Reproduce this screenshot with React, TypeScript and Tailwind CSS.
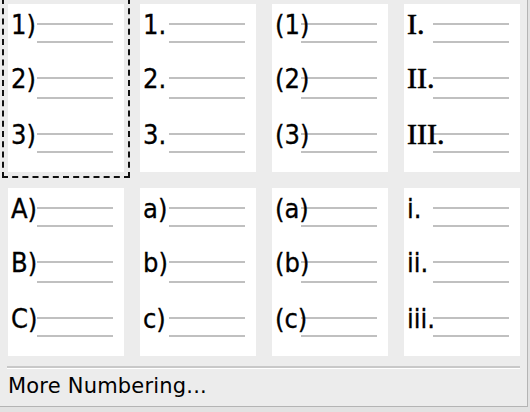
import React from "react";

type Style = {
  labels: string[];
  serif?: boolean;
};

const rows: Style[][] = [
  [
    { labels: ["1)", "2)", "3)"] },
    { labels: ["1.", "2.", "3."] },
    { labels: ["(1)", "(2)", "(3)"] },
    { labels: ["I.", "II.", "III."], serif: true },
  ],
  [
    { labels: ["A)", "B)", "C)"] },
    { labels: ["a)", "b)", "c)"] },
    { labels: ["(a)", "(b)", "(c)"] },
    { labels: ["i.", "ii.", "iii."] },
  ],
];

// gap between the two rule lines of each entry
const innerGaps = ["gap-[16px]", "gap-[18px]", "gap-[16px]"];

function Entry({ label, index, serif }: { label: string; index: number; serif?: boolean }) {
  return (
    <div className={`relative ${index === 0 ? "mt-[19px]" : "mt-[34px]"}`}>
      <div className={`ml-[29px] flex w-[76px] flex-col ${innerGaps[index]}`}>
        <div className="h-[2px] bg-[#c0c0c0]" />
        <div className="h-[2px] bg-[#c0c0c0]" />
      </div>
      {serif ? (
        <span className="absolute left-[3px] top-[-16px] whitespace-nowrap font-['Liberation_Serif',serif] text-[30px] leading-[33px] text-black [-webkit-text-stroke:0.6px_black]">
          {label}
        </span>
      ) : (
        <span className="absolute left-[3px] top-[-14px] whitespace-nowrap font-['DejaVu_Sans_Condensed','DejaVu_Sans',sans-serif] text-[27px] leading-[31px] text-black [-webkit-text-stroke:0.3px_black]">
          {label}
        </span>
      )}
    </div>
  );
}

function Card({ style, selected }: { style: Style; selected?: boolean }) {
  return (
    <div
      className={`flex h-[168px] w-[116px] flex-col bg-white ${
        selected ? "outline-2 outline-offset-4 outline-dashed outline-[#111]" : ""
      }`}
    >
      {style.labels.map((label, i) => (
        <Entry key={label} label={label} index={i} serif={style.serif} />
      ))}
    </div>
  );
}

export default function App() {
  return (
    <div className="h-[412px] w-[530px] overflow-hidden bg-[#e2e2e2]">
      <div className="h-[407px] w-[528px] border-b border-r border-[#b4b4b4] bg-[#ececec]">
        <div className="grid grid-cols-[repeat(4,116px)] gap-4 pl-[8px] pt-[4px]">
          {rows.flat().map((s, i) => (
            <Card key={i} style={s} selected={i === 0} />
          ))}
        </div>
        <div className="mx-[7px] mt-[10px] h-[2px] bg-[#c8c8c8]" />
        <div className="mx-[7px] h-[1px] bg-white" />
        <div className="mt-[5px] pl-[8px] font-['DejaVu_Sans',sans-serif] text-[21px] leading-[25px] tracking-[0.2px] text-black">
          More Numbering...
        </div>
      </div>
    </div>
  );
}
